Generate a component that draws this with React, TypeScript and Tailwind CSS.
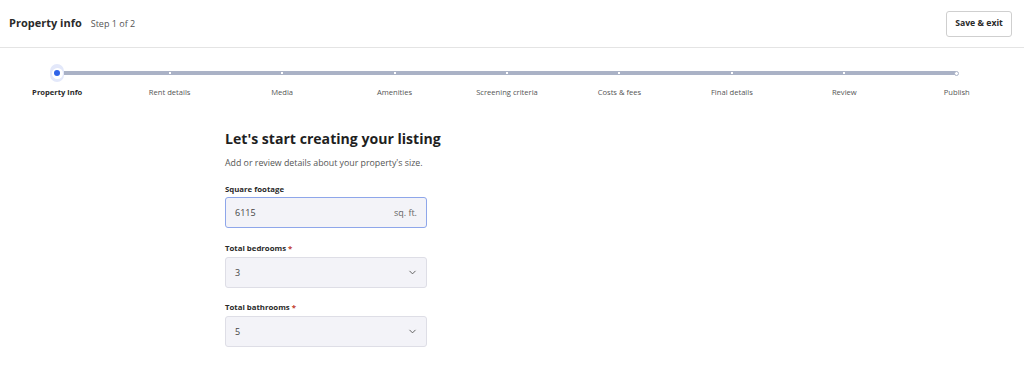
import React from "react";

const steps = [
  "Property info",
  "Rent details",
  "Media",
  "Amenities",
  "Screening criteria",
  "Costs & fees",
  "Final details",
  "Review",
  "Publish",
];

function Chevron() {
  return (
    <svg width="11" height="11" viewBox="0 0 24 24" fill="none" stroke="#555" strokeWidth="2" strokeLinecap="round" strokeLinejoin="round">
      <path d="M6 9l6 6 6-6" />
    </svg>
  );
}

export default function App() {
  return (
    <div className="w-[1024px] h-[373px] bg-white overflow-hidden text-[#222]" style={{ fontFamily: '"Open Sans", "Noto Sans", sans-serif' }}>
      <header className="h-[48px] border-b border-[#e4e4e4] flex items-center justify-between pl-[9px] pr-[12px]">
        <div className="flex items-baseline gap-[9px]">
          <span className="text-[11px] font-bold text-[#2a2a2a]">Property info</span>
          <span className="text-[9px] text-[#555]">Step 1 of 2</span>
        </div>
        <button className="h-[26px] w-[66px] border border-[#cfcfcf] rounded-[3px] text-[8.7px] font-bold text-[#2a2a2a] bg-white">Save &amp; exit</button>
      </header>

      <div className="relative ml-[1px] w-[1012px] mt-[18px]">
        <div className="absolute left-[56px] right-[56px] top-[5px] h-[4px] bg-[#aab2c6] rounded-full" />
        <div className="grid grid-cols-9">
          {steps.map((s, i) => (
            <div key={s} className="flex flex-col items-center">
              <div className="relative h-[14px] w-[14px] flex items-center justify-center">
                {i === 0 ? (
                  <div className="h-[18px] w-[18px] rounded-full bg-[#e3e8fa] flex items-center justify-center">
                    <div className="h-[11px] w-[11px] rounded-full bg-white flex items-center justify-center">
                      <div className="h-[6px] w-[6px] rounded-full bg-[#2f63e8]" />
                    </div>
                  </div>
                ) : i === 8 ? (
                  <div className="h-[5px] w-[5px] rounded-full bg-white border border-[#aab2c6]" />
                ) : (
                  <div className="h-[2px] w-[2px] bg-white" />
                )}
              </div>
              <span className={`mt-[7px] text-[7.6px] leading-[10px] whitespace-nowrap ${i === 0 ? "font-bold text-[#2a2a2a]" : "text-[#555]"}`}>{s}</span>
            </div>
          ))}
        </div>
      </div>

      <main className="ml-[225px] w-[202px] mt-[32px]">
        <h1 className="text-[14.1px] font-bold text-[#1f1f1f] leading-[20px] whitespace-nowrap">Let's start creating your listing</h1>
        <p className="mt-[8px] text-[8.8px] text-[#555] whitespace-nowrap leading-[13px]">Add or review details about your property's size.</p>

        <label className="block mt-[13px] text-[7.8px] font-bold text-[#2a2a2a] leading-[12px]">Square footage</label>
        <div className="mt-[2px] h-[31px] rounded-[3px] border border-[#8ea6ea] bg-[#f3f3f8] flex items-center justify-between px-[9px] text-[9px] text-[#444]">
          <span>6115</span>
          <span className="text-[#666]">sq. ft.</span>
        </div>

        <label className="block mt-[14px] text-[7.8px] font-bold text-[#2a2a2a] leading-[12px]">
          Total bedrooms <span className="text-[#c0392b]">*</span>
        </label>
        <div className="mt-[3px] h-[31px] rounded-[3px] border border-[#dedee6] bg-[#f3f3f8] flex items-center justify-between pl-[9px] pr-[8px] text-[9px] text-[#444]">
          <span>3</span>
          <Chevron />
        </div>

        <label className="block mt-[13px] text-[7.8px] font-bold text-[#2a2a2a] leading-[12px]">
          Total bathrooms <span className="text-[#c0392b]">*</span>
        </label>
        <div className="mt-[3px] h-[31px] rounded-[3px] border border-[#dedee6] bg-[#f3f3f8] flex items-center justify-between pl-[9px] pr-[8px] text-[9px] text-[#444]">
          <span>5</span>
          <Chevron />
        </div>
      </main>
    </div>
  );
}
